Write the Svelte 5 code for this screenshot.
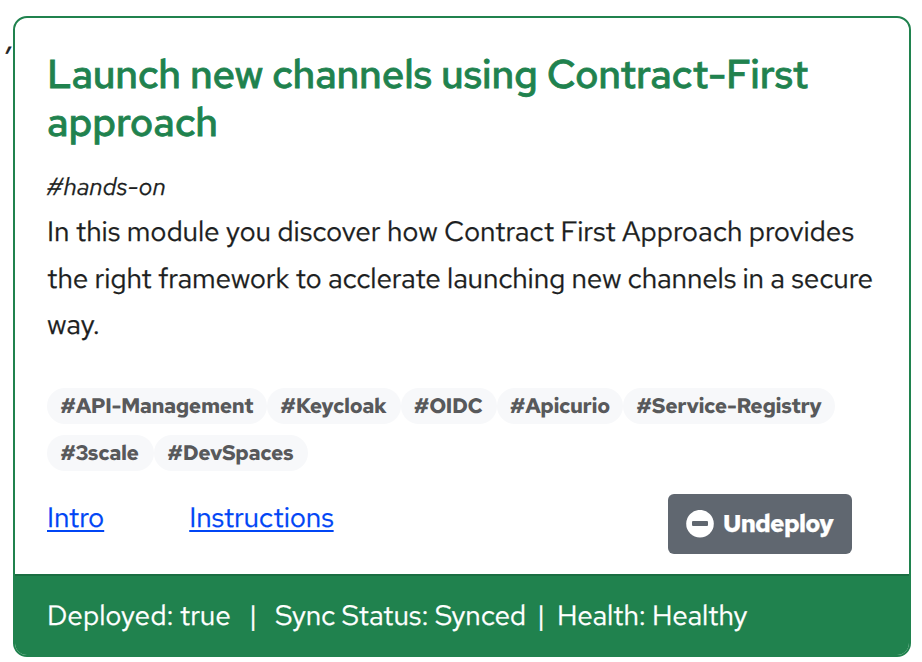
<script>
  const title = ['Launch new channels using Contract-First', 'approach'];
  const description = [
    { text: 'In this module you discover how Contract First Approach provides', spacing: -0.1 },
    { text: 'the right framework to acclerate launching new channels in a secure', spacing: -0.16 },
    { text: 'way.', spacing: -0.1 }
  ];
  const tagRows = [
    [
      { text: '#API-Management', width: 220 },
      { text: '#Keycloak', width: 133.5 },
      { text: '#OIDC', width: 96 },
      { text: '#Apicurio', width: 126.5 },
      { text: '#Service-Registry', width: 212 }
    ],
    [
      { text: '#3scale', width: 107 },
      { text: '#DevSpaces', width: 154 }
    ]
  ];
</script>

<div class="page">
  <span class="comma">,</span>
  <article class="card">
    <div class="body">
      <h2>
        {#each title as line}<span class="line">{line}</span>{/each}
      </h2>
      <div class="kind">#hands-on</div>
      <p>
        {#each description as line}<span class="line" style="letter-spacing: {line.spacing}px">{line.text}</span>{/each}
      </p>
      <div class="tags">
        {#each tagRows as row}
          <div class="row">
            {#each row as tag}
              <span class="tag" style="width: {tag.width}px">{tag.text}</span>
            {/each}
          </div>
        {/each}
      </div>
      <div class="actions">
        <a class="intro" href="#intro">Intro</a>
        <a class="instructions" href="#instructions">Instructions</a>
        <button type="button">
          <svg width="28" height="28" viewBox="0 0 28 28" aria-hidden="true">
            <circle cx="14" cy="13.7" r="13.8" fill="#fff" />
            <rect x="6" y="11" width="16" height="5" rx="1" fill="#606770" />
          </svg>
          <span>Undeploy</span>
        </button>
      </div>
    </div>
    <footer>
      <span class="deployed">Deployed: true</span>
      <span class="bar">|</span>
      <span class="sync">Sync Status: Synced</span>
      <span class="bar">|</span>
      <span class="health">Health: Healthy</span>
    </footer>
  </article>
</div>

<style>
  :global(body) {
    background: #fff;
  }
  .page {
    position: relative;
    box-sizing: border-box;
    width: 922px;
    height: 662px;
    padding: 16px 11px 5px 13px;
    overflow: hidden;
    font-family: 'Red Hat Text', Inter, 'Liberation Sans', sans-serif;
    font-weight: 400;
    -webkit-text-stroke: 0.25px currentColor;
    text-rendering: geometricPrecision;
    color: #1c1e21;
  }
  .comma {
    position: absolute;
    left: 7px;
    top: 25px;
    font-size: 28px;
    line-height: 28px;
    font-style: italic;
    -webkit-text-stroke-width: 0.8px;
  }
  .card {
    box-sizing: border-box;
    display: flex;
    flex-direction: column;
    height: 641px;
    border: 2px solid #20824e;
    border-radius: 14px;
    background: #fff;
  }
  .body {
    flex: 1;
    padding: 33px 32px 0;
  }
  .line {
    display: block;
    width: max-content;
    white-space: nowrap;
  }
  h2 {
    margin: 0;
    font-size: 40px;
    line-height: 48px;
    font-weight: 500;
    letter-spacing: -0.16px;
    color: #20824e;
    -webkit-text-stroke-width: 0.8px;
  }
  .kind {
    margin-top: 17px;
    font-size: 24.5px;
    line-height: 46px;
    height: 46px;
    font-style: italic;
    letter-spacing: -0.03px;
    width: max-content;
  }
  p {
    margin: -2px 0 0;
    font-size: 28px;
    line-height: 46.5px;
  }
  .tags {
    display: flex;
    flex-direction: column;
    gap: 11px;
    margin-top: 40px;
  }
  .row {
    display: flex;
  }
  .tag {
    box-sizing: border-box;
    flex: none;
    height: 36px;
    padding-left: 13.3px;
    border-radius: 18px;
    background: #f7f8fa;
    color: #58595b;
    font-size: 21px;
    line-height: 38px;
    font-weight: 700;
    letter-spacing: -0.4px;
    white-space: nowrap;
    -webkit-text-stroke-width: 0;
  }
  .actions {
    display: flex;
    align-items: flex-start;
    margin-top: 23px;
  }
  a {
    color: #0045f5;
    font-size: 28px;
    line-height: 47px;
    letter-spacing: -0.15px;
    text-decoration-thickness: 2px;
    text-underline-offset: 3px;
    white-space: nowrap;
  }
  .intro {
    margin-right: 85px;
  }
  button {
    box-sizing: border-box;
    display: flex;
    align-items: center;
    width: 184px;
    height: 60px;
    margin: 0 25px 0 auto;
    padding: 0 0 0 18px;
    border: 0;
    border-radius: 6px;
    background: #606770;
    color: #fff;
    font-family: inherit;
    font-size: 24.5px;
    font-weight: 700;
    letter-spacing: -0.7px;
  }
  button span {
    margin-top: -1px;
  }
  button svg {
    flex: none;
    margin-right: 9px;
  }
  footer {
    box-sizing: border-box;
    display: flex;
    align-items: center;
    height: 81px;
    padding: 0 0 2px 32px;
    border-top: 2px solid #1a6e42;
    border-radius: 0 0 12px 12px;
    background: #20824e;
    color: #fff;
    font-size: 28px;
    white-space: nowrap;
    letter-spacing: -0.13px;
  }
  .deployed {
    width: 202px;
    letter-spacing: -0.05px;
  }
  .bar {
    flex: none;
    width: 10px;
  }
  .sync {
    width: 262px;
    margin-left: 16px;
  }
  .health {
    margin-left: 10px;
    letter-spacing: -0.17px;
  }
</style>
